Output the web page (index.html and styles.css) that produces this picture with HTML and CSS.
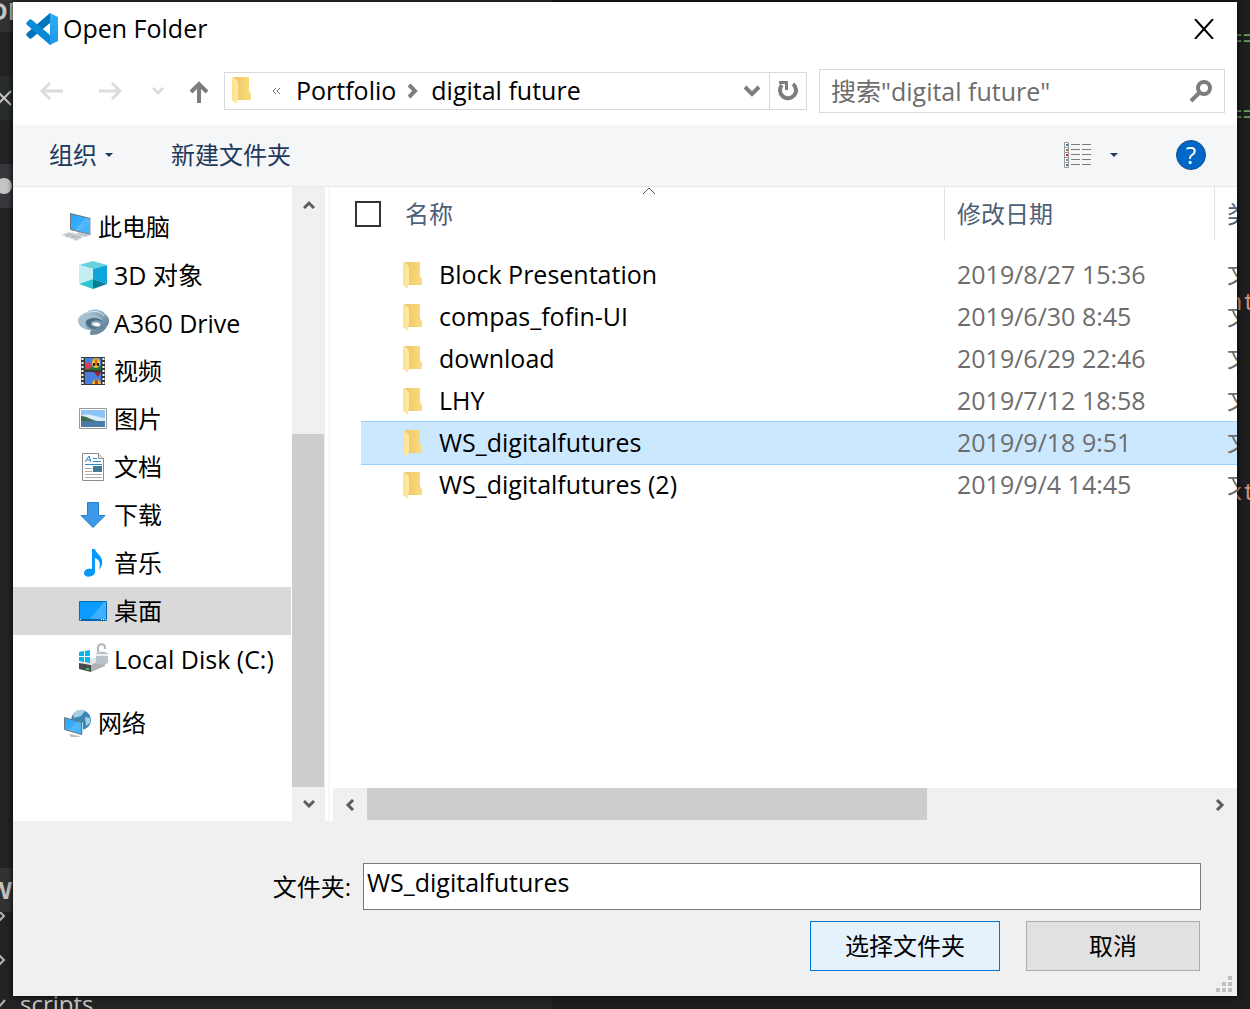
FILE: index.html
```html
<!DOCTYPE html>
<html lang="zh-CN">
<head>
<meta charset="utf-8">
<title>Open Folder</title>
<link rel="stylesheet" href="styles.css">
</head>
<body>
<svg class="defs" width="0" height="0" aria-hidden="true">
  <defs>
    <linearGradient id="folderBack" x1="0" y1="0" x2="1" y2="0"><stop offset="0" stop-color="#ecc663"/><stop offset="1" stop-color="#fbdc80"/></linearGradient>
    <linearGradient id="folderFront" x1="0" y1="0" x2="1" y2="0"><stop offset="0" stop-color="#ffe08a"/><stop offset="1" stop-color="#ffeaa9"/></linearGradient>
    <linearGradient id="screen" x1="0" y1="0" x2="1" y2="1"><stop offset="0" stop-color="#2ba4f8"/><stop offset=".5" stop-color="#3aaeff"/><stop offset=".51" stop-color="#56bbff"/><stop offset="1" stop-color="#3aaeff"/></linearGradient>
    <linearGradient id="ring" x1="0" y1="0" x2="1" y2="1"><stop offset="0" stop-color="#c3dae5"/><stop offset=".5" stop-color="#86a5b8"/><stop offset="1" stop-color="#4c6a82"/></linearGradient>
    <linearGradient id="panel" x1="0" y1="0" x2="0" y2="1"><stop offset="0" stop-color="#2bb0f5"/><stop offset="1" stop-color="#1f97ea"/></linearGradient>
    <symbol id="folder" viewBox="0 0 20 28">
      <path d="M1 0h16v14l2 3v6H5V4z" fill="url(#folderBack)"/>
      <path d="M0 0l6 5v16l-1 2v4l-5-4z" fill="url(#folderFront)"/>
    </symbol>
  </defs>
</svg>

<div class="desktop">
  <div class="editor" aria-hidden="true">
    <div class="explorer">
      <div class="band band-title">DI</div>
      <div class="band band-tab"><svg width="16" height="16" viewBox="0 0 16 16"><path d="M1 1l14 14M15 1L1 15" stroke="#c5c5c5" stroke-width="2"/></svg></div>
      <div class="band band-dirty"><i class="dot"></i></div>
      <div class="band band-section">W</div>
      <div class="tree-rows">
        <div class="tree-row"><svg width="8" height="12" viewBox="0 0 8 12"><path d="M1 1l5 5-5 5" fill="none" stroke="#b5b5b5" stroke-width="2"/></svg></div>
        <div class="tree-row"><svg width="8" height="12" viewBox="0 0 8 12"><path d="M1 1l5 5-5 5" fill="none" stroke="#b5b5b5" stroke-width="2"/></svg></div>
        <div class="tree-row"><svg width="8" height="12" viewBox="0 0 8 12"><path d="M0 10L7 2" fill="none" stroke="#b5b5b5" stroke-width="2"/></svg><span>scripts</span></div>
      </div>
    </div>
    <div class="code">
      <span class="comment">==</span>
      <span class="comment">==</span>
      <span class="string first">nt</span>
      <span class="string">xt</span>
    </div>
  </div>

  <main class="dialog">
    <header class="titlebar">
      <svg class="logo" width="32" height="32" viewBox="0 0 32 32">
        <path d="M24 0L1 20c-1 1-1 2 0 3l2 2c1 1 2 1 3 0L24 10z" fill="#0074bd"/>
        <path d="M24 32L1 12c-1-1-1-2 0-3l2-2c1-1 2-1 3 0l18 15z" fill="#0a8ad4"/>
        <path d="M23 0h1l8 4v24l-8 4c-1 0-1-1 0-2V3c0-2 0-2-1-3z" fill="url(#panel)"/>
      </svg>
      <h1>Open Folder</h1>
      <button class="close" type="button" aria-label="关闭"><svg width="20" height="20" viewBox="0 0 20 20"><path d="M1 0l18 20M19 0L1 20" stroke="#000" stroke-width="2"/></svg></button>
    </header>

    <div class="navbar">
      <div class="history">
        <button type="button" aria-label="后退"><svg width="24" height="18" viewBox="0 0 24 18"><path d="M23 9H3M10 1L2 9l8 8" fill="none" stroke="#dcdcdc" stroke-width="3"/></svg></button>
        <button type="button" aria-label="前进"><svg width="24" height="18" viewBox="0 0 24 18"><path d="M1 9h20M14 1l8 8-8 8" fill="none" stroke="#dcdcdc" stroke-width="3"/></svg></button>
        <button class="recent" type="button" aria-label="最近"><svg width="12" height="8" viewBox="0 0 12 8"><path d="M1 1l5 5 5-5" fill="none" stroke="#dcdcdc" stroke-width="3"/></svg></button>
        <button class="up" type="button" aria-label="向上"><svg width="20" height="22" viewBox="0 0 20 22"><path d="M10 22V3M2 11l8-8 8 8" fill="none" stroke="#7d7d7d" stroke-width="4"/></svg></button>
      </div>
      <div class="address">
        <svg class="folder" width="20" height="28"><use href="#folder"/></svg>
        <button class="overflow" type="button" aria-label="更多"><svg width="9" height="6" viewBox="0 0 9 6"><path d="M4 0L1 3l3 3M8 0L5 3l3 3" fill="none" stroke="#777"/></svg></button>
        <a href="#">Portfolio</a>
        <svg class="crumb" width="10" height="16" viewBox="0 0 10 16"><path d="M1 2l6 6-6 6" fill="none" stroke="#7d7d7d" stroke-width="4"/></svg>
        <a href="#">digital future</a>
        <button class="drop" type="button" aria-label="历史"><svg width="18" height="12" viewBox="0 0 18 12"><path d="M2 2l7 7 7-7" fill="none" stroke="#7d7d7d" stroke-width="4"/></svg></button>
        <button class="refresh" type="button" aria-label="刷新"><svg width="20" height="22" viewBox="0 0 20 22"><path d="M15 4A8 8 0 1 1 4 5" fill="none" stroke="#7d7d7d" stroke-width="4"/><path d="M1 1h9v9H7V4H1z" fill="#7d7d7d"/></svg></button>
      </div>
      <label class="search">
        <input type="text" aria-label="搜索" placeholder='搜索"digital future"'>
        <svg width="24" height="24" viewBox="0 0 24 24"><circle cx="15" cy="9" r="6" fill="none" stroke="#7d7d7d" stroke-width="4"/><path d="M11 13l-9 9" stroke="#7d7d7d" stroke-width="4"/></svg>
      </label>
    </div>

    <div class="toolbar">
      <button type="button">组织<svg width="8" height="4" viewBox="0 0 8 4"><path d="M0 0h8L4 4z" fill="#1e395b"/></svg></button>
      <button type="button">新建文件夹</button>
      <button class="view" type="button" aria-label="更改视图">
        <svg width="28" height="26" viewBox="0 0 28 26">
          <path d="M.5.5h4v25h-4zM0 5.500h5M0 10.500h5M0 15.500h5M0 20.500h5" fill="#fff" stroke="#999"/>
          <path d="M7 2.500h9M18 2.500h9M7 7.500h9M18 7.500h9M7 12.500h9M18 12.500h9M7 17.500h9M18 17.500h9M7 22.500h9M18 22.500h9" stroke="#7b7b7b"/>
          <path d="M2 2h2v2H2zM2 22h2v2H2z" fill="#3477b5"/><path d="M2 7h2v2H2z" fill="#8c7430"/><path d="M2 12h2v2H2z" fill="#c2281d"/><path d="M2 17h2v2H2z" fill="#6fa57d"/>
        </svg>
        <svg width="8" height="4" viewBox="0 0 8 4"><path d="M0 0h8L4 4z" fill="#1e395b"/></svg>
      </button>
      <button class="help" type="button" aria-label="帮助">?</button>
    </div>

    <div class="panes">
      <nav class="places">
        <ul>
          <li class="root"><a href="#"><svg width="32" height="32" viewBox="0 0 32 32"><path d="M9.500 2.500l20 5v16l-20-5z" fill="url(#screen)" stroke="#70777b"/><path d="M29 7l1 1v16l-1-1z" fill="#c7ccd0"/><path d="M17 21l9 2 3 1-5 2-8-2z" fill="#b9c3ca"/><path d="M8 21l16 4-8 5L0 24z" fill="#d9dcde"/><path d="M6 22.500l14 4M3 23.500l14 4M12 22L5 26M16 23l-6 4M20 24l-6 5" stroke="#b0b6ba"/></svg>此电脑</a></li>
          <li class="latin"><a href="#"><svg width="32" height="32" viewBox="0 0 32 32"><path d="M16 2l14 4-14 4L2 6z" fill="#67d3e0"/><path d="M2 6l14 4v10L2 25z" fill="#c5eef2"/><path d="M30 6l-14 4v10l14 5z" fill="#0ba5dc"/><path d="M2 25l14-5v10z" fill="#2ec5d3"/><path d="M30 25l-14-5v10z" fill="#067e97"/></svg>3D 对象</a></li>
          <li class="latin"><a href="#"><svg width="32" height="32" viewBox="0 0 32 32"><path d="M10 5C14 1 25 2 28 7c5 3 5 9 2 12-3 6-9 9-15 9-3 0-2-4-1-5-8 0-14-5-13-11 1-3 4-5 9-7z" fill="url(#ring)"/><path d="M2 12c6-6 20-5 24 1-6-4-14-3-17 1-2 3-1 7 5 9C6 22 1 18 2 12z" fill="#a3c1d0"/><path d="M9 14c4-4 13-4 17 1-5-2-11-2-12 1-1 4 4 5 8 4-3 4-14 1-13-6z" fill="#4e6d83"/><path d="M15 17c2-2 6-2 8 0 1 2-2 3-5 2z" fill="#fff"/><path d="M10 6c6-3 14-2 17 3" fill="none" stroke="#d6e6ee"/><path d="M15 26c6 1 12-2 15-9" fill="none" stroke="#6f8da2" stroke-width="2"/></svg>A360 Drive</a></li>
          <li><a href="#"><svg width="32" height="32" viewBox="0 0 32 32"><path d="M4 2h24v28H4z" fill="#383838"/><path d="M8 3h16v12H8zM8 17h16v12H8z" fill="#477fe0"/><path d="M8 13c5-2 10 1 16-2v4H8z" fill="#207333"/><path d="M8 9l4-2 3 4-3 3H8z" fill="#df3b4f"/><ellipse cx="19" cy="8" rx="4" ry="5" fill="#f1c021"/><path d="M16 8h2v3h-2zM20 8h2v3h-2z" fill="#382010"/><path d="M18 4h2v6h-2z" fill="#d8612b"/><path d="M17 17h7l-3 5z" fill="#a21d20"/><path d="M15 29c0-6 9-6 9 0z" fill="#f3b22a"/><path d="M18 25h3v4h-3z" fill="#b8402a"/><path d="M5.500 3v26M26.500 3v26" stroke="#fff" stroke-width="2" stroke-dasharray="2 2"/></svg>视频</a></li>
          <li><a href="#"><svg width="32" height="32" viewBox="0 0 32 32"><path d="M2.500 5.500h27v20h-27z" fill="#fff" stroke="#999"/><path d="M4 7h24v17H4z" fill="#8cc4f5"/><path d="M4 13c7-4 14 1 24 2v4H4z" fill="#dcedf6"/><path d="M4 13c6 0 10 4 16 5H4z" fill="#3c6d52"/><path d="M4 18h24v6H4z" fill="#487ca6"/></svg>图片</a></li>
          <li><a href="#"><svg width="32" height="32" viewBox="0 0 32 32"><path d="M5.500 2.500h16l5 5v22h-21z" fill="#fff" stroke="#8d8d8d"/><path d="M21.500 2.500v5h5" fill="#e4e4e4" stroke="#8d8d8d"/><path d="M8 11L12 5l2 6M10 9h3" fill="none" stroke="#2b88cc" stroke-width="1"/><path d="M16 7.500h4M16 10.500h8M8 13.500h17" stroke="#2b88cc"/><path d="M8 17.500h7M8 20.500h7M8 23.500h17M8 26.500h17" stroke="#aaa"/><path d="M16 15h9v6h-9z" fill="#417a98"/></svg>文档</a></li>
          <li><a href="#"><svg width="32" height="32" viewBox="0 0 32 32"><path d="M10.500 3.500h11v13h6.500L16 28.500 4 16.500h6.500z" fill="#3e98e8" stroke="#237fc8"/></svg>下载</a></li>
          <li><a href="#"><svg width="32" height="32" viewBox="0 0 32 32"><path d="M15 2h3c1 5 9 7 7 16l-3 5c2-8 0-10-4-12v14c0 5-11 7-11 1 0-4 5-5 8-4z" fill="#0799f5"/></svg>音乐</a></li>
          <li class="selected"><a href="#"><svg width="32" height="32" viewBox="0 0 32 32"><path d="M2.500 6.500h27v19h-27z" fill="#0c9cff" stroke="#086bb1"/><path d="M12 25L27 7h2v18z" fill="#3db0ff"/><path d="M3 24.500h26" stroke="#08639e"/><path d="M3 24.500h1M24 24.500h1M26 24.500h1M28 24.500h1" stroke="#fff"/></svg>桌面</a></li>
          <li class="latin"><a href="#"><svg width="32" height="32" viewBox="0 0 32 32"><path d="M2 20l9-5h17l-9 7z" fill="#e4e4e4"/><path d="M2 20l12 2v7L2 26z" fill="#484b4d"/><path d="M14 22l14-6v7l-14 6z" fill="#aeb2b5"/><path d="M9 25h3v2H9z" fill="#43bd58"/><path d="M2 9l5-1v5H2zM8 8l5-1v6H8zM2 14h5v5l-5-1zM8 14h5v6l-5-1z" fill="#00b7ee"/><path d="M21 9V5c0-5 7-5 7 0v1" fill="none" stroke="#aeb7bc" stroke-width="2"/><path d="M19 10c4-2 8-2 12 0v10c-4 2-8 2-12 0z" fill="#b9c2c9"/><path d="M19 12h12" stroke="#e8f0f4" stroke-width="2"/></svg>Local Disk (C:)</a></li>
          <li class="root spaced"><a href="#"><svg width="32" height="32" viewBox="0 0 32 32"><circle cx="20" cy="13" r="10" fill="#3a86b4"/><path d="M12 7c5-5 9-5 12-3l-4 5-7 2zM24 10l5 1v5l-4 3z" fill="#a5cfe2"/><path d="M3.500 10.500l17 5v12l-17-5z" fill="url(#screen)" stroke="#70777b"/><path d="M21 15l1 1v11l-1 1z" fill="#d3d8db"/><path d="M8 27l10 2 1 1h-9z" fill="#b6bec3"/></svg>网络</a></li>
        </ul>
        <div class="vscroll">
          <button type="button" aria-label="向上滚动"><svg width="12" height="10" viewBox="0 0 12 10"><path d="M1 9l5-5 5 5" fill="none" stroke="#5d5d5d" stroke-width="3"/></svg></button>
          <div class="vgap"></div>
          <div class="vthumb"></div>
          <button type="button" aria-label="向下滚动"><svg width="12" height="10" viewBox="0 0 12 10"><path d="M1 2l5 5 5-5" fill="none" stroke="#5d5d5d" stroke-width="3"/></svg></button>
        </div>
      </nav>
      <div class="splitter"></div>
      <section class="files">
        <div class="list">
          <svg class="sort" width="14" height="8" viewBox="0 0 14 8"><path d="M1 7l6-6 6 6" fill="none" stroke="#555"/></svg>
          <table>
            <colgroup><col class="c-gutter"><col class="c-name"><col class="c-date"><col class="c-type"></colgroup>
            <thead>
              <tr><th colspan="2" scope="col"><div class="head first"><input type="checkbox" aria-label="全选">名称</div></th><th scope="col"><div class="head">修改日期</div></th><th scope="col"><div class="head">类型</div></th></tr>
            </thead>
            <tbody>
              <tr><td></td><td class="name"><svg width="20" height="28"><use href="#folder"/></svg>Block Presentation</td><td>2019/8/27 15:36</td><td class="type">文件夹</td></tr>
              <tr><td></td><td class="name"><svg width="20" height="28"><use href="#folder"/></svg>compas_fofin-UI</td><td>2019/6/30 8:45</td><td class="type">文件夹</td></tr>
              <tr><td></td><td class="name"><svg width="20" height="28"><use href="#folder"/></svg>download</td><td>2019/6/29 22:46</td><td class="type">文件夹</td></tr>
              <tr><td></td><td class="name"><svg width="20" height="28"><use href="#folder"/></svg>LHY</td><td>2019/7/12 18:58</td><td class="type">文件夹</td></tr>
              <tr class="selected"><td></td><td class="name"><svg width="20" height="28"><use href="#folder"/></svg>WS_digitalfutures</td><td>2019/9/18 9:51</td><td class="type">文件夹</td></tr>
              <tr><td></td><td class="name"><svg width="20" height="28"><use href="#folder"/></svg>WS_digitalfutures (2)</td><td>2019/9/4 14:45</td><td class="type">文件夹</td></tr>
            </tbody>
          </table>
        </div>
        <div class="hscroll">
          <button type="button" aria-label="向左滚动"><svg width="10" height="12" viewBox="0 0 10 12"><path d="M8 1L3 6l5 5" fill="none" stroke="#5d5d5d" stroke-width="3"/></svg></button>
          <div class="htrack"><div class="hthumb"></div></div>
          <button type="button" aria-label="向右滚动"><svg width="10" height="12" viewBox="0 0 10 12"><path d="M2 1l5 5-5 5" fill="none" stroke="#5d5d5d" stroke-width="3"/></svg></button>
        </div>
      </section>
    </div>

    <footer class="footer">
      <div class="field">
        <label for="folder-name">文件夹:</label>
        <input id="folder-name" type="text" value="WS_digitalfutures">
      </div>
      <div class="actions">
        <button class="primary" type="button">选择文件夹</button>
        <button type="button">取消</button>
      </div>
      <svg class="grip" width="16" height="16" viewBox="0 0 16 16"><path d="M12 0h4v4h-4zM6 6h4v4H6zM12 6h4v4h-4zM0 12h4v4H0zM6 12h4v4H6zM12 12h4v4h-4z" fill="#bfbfbf"/></svg>
    </footer>
  </main>
</div>
</body>
</html>
```
FILE: styles.css
```css
* { box-sizing: border-box; }

body {
  margin: 0;
  background: #1e1e1e;
  color: #000;
  font: 24px/32px "Open Sans", "Noto Sans CJK SC", sans-serif;
}

button, input { font: inherit; color: inherit; }
button { padding: 0; border: 0; background: none; }
a { color: inherit; text-decoration: none; }
svg { display: block; flex: none; }
.defs { position: absolute; }

.desktop {
  position: relative;
  display: flex;
  height: 100vh;
  min-height: 900px;
  padding: 2px 13px 13px;
  overflow: hidden;
}

/* Editor window behind the dialog */
.editor {
  position: absolute;
  inset: 0;
  display: flex;
  justify-content: space-between;
  overflow: hidden;
  color: #c5c5c5;
}
.explorer {
  display: flex;
  flex-direction: column;
  width: 552px;
  background: #232323;
}
.band {
  display: flex;
  align-items: center;
  flex: none;
  height: 44px;
  margin-bottom: 44px;
  overflow: hidden;
}
.band-title { height: 32px; padding-bottom: 10px; background: #333; font-weight: 700; text-indent: -10px; }
.band-tab { background: #292d2e; }
.band-tab svg { margin-left: -4px; }
.band-dirty { background: #37373d; }
.dot { width: 16px; height: 16px; margin-left: -4px; border-radius: 8px; background: #c5c5c5; }
.band-section { margin: auto 0 0; background: #333; font-weight: 700; text-indent: -11px; }
.tree-rows {
  display: flex;
  flex-direction: column;
  justify-content: flex-end;
  flex: none;
  height: 114px;
  margin-bottom: -17px;
  overflow: hidden;
}
.tree-row { display: flex; align-items: center; flex: none; gap: 14px; height: 44px; margin-left: -2px; }
.code {
  display: flex;
  flex-direction: column;
  width: 16px;
  padding-top: 24px;
  white-space: nowrap;
  font-family: "Liberation Mono", monospace;
}
.comment { height: 76px; margin-left: -6px; color: #6a9955; }
.string { height: 190px; margin-left: -6px; color: #ce9178; }
.string.first { margin-top: 112px; }

/* Dialog window */
.dialog {
  position: relative;
  display: flex;
  flex-direction: column;
  flex: 1;
  min-width: 0;
  background: #fff;
  box-shadow: 0 0 6px #000;
}

.titlebar { display: flex; align-items: center; height: 54px; padding: 0 23px 0 13px; }
.titlebar h1 { flex: 1; margin: 0 0 0 5px; padding-bottom: 2px; font-size: 25px; font-weight: 400; }

.navbar { display: flex; align-items: center; height: 69px; padding: 0 12px 0 27px; font-size: 25px; }
.history { display: flex; align-items: center; flex: none; gap: 34px; width: 184px; }
.recent { margin: 0 -9px 0 -4px; }
.up { padding-top: 3px; }
.address {
  display: flex;
  align-items: center;
  flex: 1 1 583px;
  height: 38px;
  padding-left: 7px;
  border: 1px solid #d9d9d9;
}
.address a { padding-bottom: 1px; }
.overflow { margin: 0 15px 0 20px; }
.crumb { margin: 0 13px 0 12px; }
.drop { margin: 0 8px 0 auto; }
.refresh {
  display: flex;
  align-items: center;
  justify-content: center;
  width: 37px;
  height: 36px;
  border-left: 1px solid #d9d9d9;
}
.search {
  display: flex;
  align-items: center;
  flex: 1 1 406px;
  height: 44px;
  margin-left: 12px;
  padding: 0 11px;
  border: 1px solid #d9d9d9;
}
.search input { flex: 1; min-width: 0; padding: 0; border: 0; outline: 0; background: none; }
.search input::placeholder { color: #6d6d6d; opacity: 1; }

.toolbar {
  display: flex;
  align-items: center;
  height: 62px;
  padding: 0 31px 2px 36px;
  border-bottom: 1px solid #e5e7ea;
  background: #f4f6f8;
  color: #1e395b;
}
.toolbar button { display: flex; align-items: center; gap: 8px; margin-right: 58px; }
.toolbar .view { gap: 18px; margin-left: auto; }
.toolbar .help {
  justify-content: center;
  width: 30px;
  height: 30px;
  margin: 0;
  border: 1px solid #12508c;
  border-radius: 50%;
  background: #0067c7;
  color: #fff;
}

.panes { display: flex; flex: 1; min-height: 0; }
.places { display: flex; flex: none; width: 312px; }
.places ul { flex: 1; margin: 0 1px 0 0; padding: 16px 0 0; list-style: none; }
.places a { display: flex; align-items: center; gap: 5px; height: 48px; padding-left: 64px; white-space: nowrap; }
.places .latin { font-size: 25px; }
.places .root a { padding-left: 48px; }
.places .spaced { margin-top: 16px; }
.places .selected { background: #d9d9d9; }

.vscroll { display: flex; flex-direction: column; width: 33px; background: #f0f0f0; }
.vscroll button { display: flex; align-items: center; justify-content: center; height: 34px; }
.vgap { flex: 213; }
.vthumb { flex: 353; margin-right: 1px; background: #cdcdcd; }
.splitter { width: 2px; margin: 0 3px; background: #f7f7f7; }

.files { display: flex; flex-direction: column; flex: 1; min-width: 0; }
.list { position: relative; flex: 1; overflow: hidden; padding-left: 16px; }
.sort { position: absolute; left: 309px; top: 0; }
table { width: 1000px; border-collapse: collapse; table-layout: fixed; }
.c-gutter { width: 12px; }
.c-name { width: 584px; }
.c-date { width: 270px; }
th { padding: 0 0 13px; font-weight: 400; text-align: left; color: #4c607a; }
.head { display: flex; align-items: center; height: 54px; padding-left: 12px; border-right: 1px solid #e2e2e2; }
.head.first { padding-left: 6px; }
.head input { appearance: none; width: 26px; height: 26px; margin: 0 24px 0 0; border: 2px solid #333; background: #fff; }
td { height: 42px; padding: 0 0 2px 12px; color: #6d6d6d; font-size: 25px; }
td:first-child { padding: 0; }
td.type { font-size: 24px; }
td.name { padding-left: 42px; color: #000; }
td.name svg { float: left; margin: 4px 16px 0 0; }
tr.selected td + td { background: #cce8ff; box-shadow: 0 1px #99d1ff, 0 -1px #99d1ff; }

.hscroll { display: flex; height: 33px; background: #f0f0f0; }
.hscroll button { display: flex; align-items: center; justify-content: center; width: 34px; }
.htrack { flex: 1; }
.hthumb { width: 67%; height: 32px; background: #cdcdcd; }

.footer { position: relative; padding: 42px 36px 25px; background: #f0f0f0; }
.field { display: flex; align-items: center; justify-content: flex-end; gap: 12px; height: 47px; }
.field input {
  width: calc(100% - 314px);
  height: 47px;
  padding: 0 4px 10px 3px;
  border: 1px solid #7a7a7a;
  background: #fff;
  outline: 0;
  font-size: 25px;
}
.actions { display: flex; justify-content: flex-end; gap: 26px; margin: 11px 1px 0 0; }
.actions button { width: 174px; height: 50px; border: 1px solid #adadad; background: #e1e1e1; }
.actions .primary { width: 190px; border-color: #0078d7; background: #e5f1fb; }
.grip { position: absolute; right: 5px; bottom: 4px; }
```
